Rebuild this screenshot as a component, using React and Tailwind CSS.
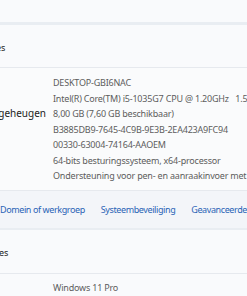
export default function App() {
  const rows = [
    ["Apparaatnaam", "DESKTOP-GBI6NAC"],
    ["Processor", "Intel(R) Core(TM) i5-1035G7 CPU @ 1.20GHz\u00a0\u00a0\u00a01.50 GHz"],
    ["Geïnstalleerd RAM-geheugen", "8,00 GB (7,60 GB beschikbaar)"],
    ["Apparaat-id", "B3885DB9-7645-4C9B-9E3B-2EA423A9FC94"],
    ["Product-id", "00330-63004-74164-AAOEM"],
    ["Type systeem", "64-bits besturingssysteem, x64-processor"],
    ["Pen en aanraken", "Ondersteuning voor pen- en aanraakinvoer met 10 aanraakpunten"],
  ]

  return (
    <div
      className="w-[247px] h-[296px] overflow-hidden bg-[#f9fafc] text-[9px] tracking-[-0.2px] text-[#1b1b1b]"
      style={{ fontFamily: '"Noto Sans", "Open Sans", sans-serif' }}
    >
      {/* einde vorige kaart */}
      <div className="h-[22px] bg-[#f9fafc]" />
      <div className="h-[3px] bg-[#e9edf2]" />

      {/* Apparaatspecificaties */}
      <div className="h-[43px] flex items-center pt-[3px] bg-[#f9fafc] border-b border-[#e6e9ee]">
        <div className="w-[5px] flex justify-end whitespace-nowrap">
          <span>Apparaatspecificaties</span>
        </div>
      </div>

      <div className="flex pt-[7px] pb-[6.5px] bg-[#fafbfc] leading-[15.5px] whitespace-nowrap">
        <div className="w-[53px] shrink-0 flex justify-end">
          <div className="flex flex-col items-start pr-[7px] text-[10px] tracking-normal">
            {rows.map(([label]) => (
              <span key={label}>{label}</span>
            ))}
          </div>
        </div>
        <div className="flex flex-col text-[#5d5d5d]">
          {rows.map(([label, value]) => (
            <span key={label}>{value}</span>
          ))}
        </div>
      </div>

      {/* gerelateerde koppelingen */}
      <div className="h-[38px] flex items-center gap-[16px] bg-[#f3f5f9] border-t border-[#e6e9ee] text-[#2a64b6] tracking-[-0.4px] whitespace-nowrap">
        <span>Domein of werkgroep</span>
        <span>Systeembeveiliging</span>
        <span>Geavanceerde systeeminstellingen</span>
      </div>
      <div className="h-[2px] bg-[#e9edf2]" />

      {/* Windows-specificaties */}
      <div className="h-[44px] flex items-center pt-[2px] bg-[#f9fafc] border-b border-[#e6e9ee]">
        <div className="w-[8px] flex justify-end whitespace-nowrap">
          <span>Windows-specificaties</span>
        </div>
      </div>

      <div className="flex pt-[6px] leading-[15.5px] whitespace-nowrap">
        <div className="w-[53px] shrink-0 flex justify-end">
          <div className="flex flex-col items-start pr-[7px] text-[10px] tracking-normal">
            <span>Editie</span>
            {/* zelfde kolombreedte als hierboven */}
            <span className="h-0 invisible">Geïnstalleerd RAM-geheugen</span>
          </div>
        </div>
        <div className="flex flex-col text-[#5d5d5d]">
          <span>Windows 11 Pro</span>
        </div>
      </div>
    </div>
  )
}
